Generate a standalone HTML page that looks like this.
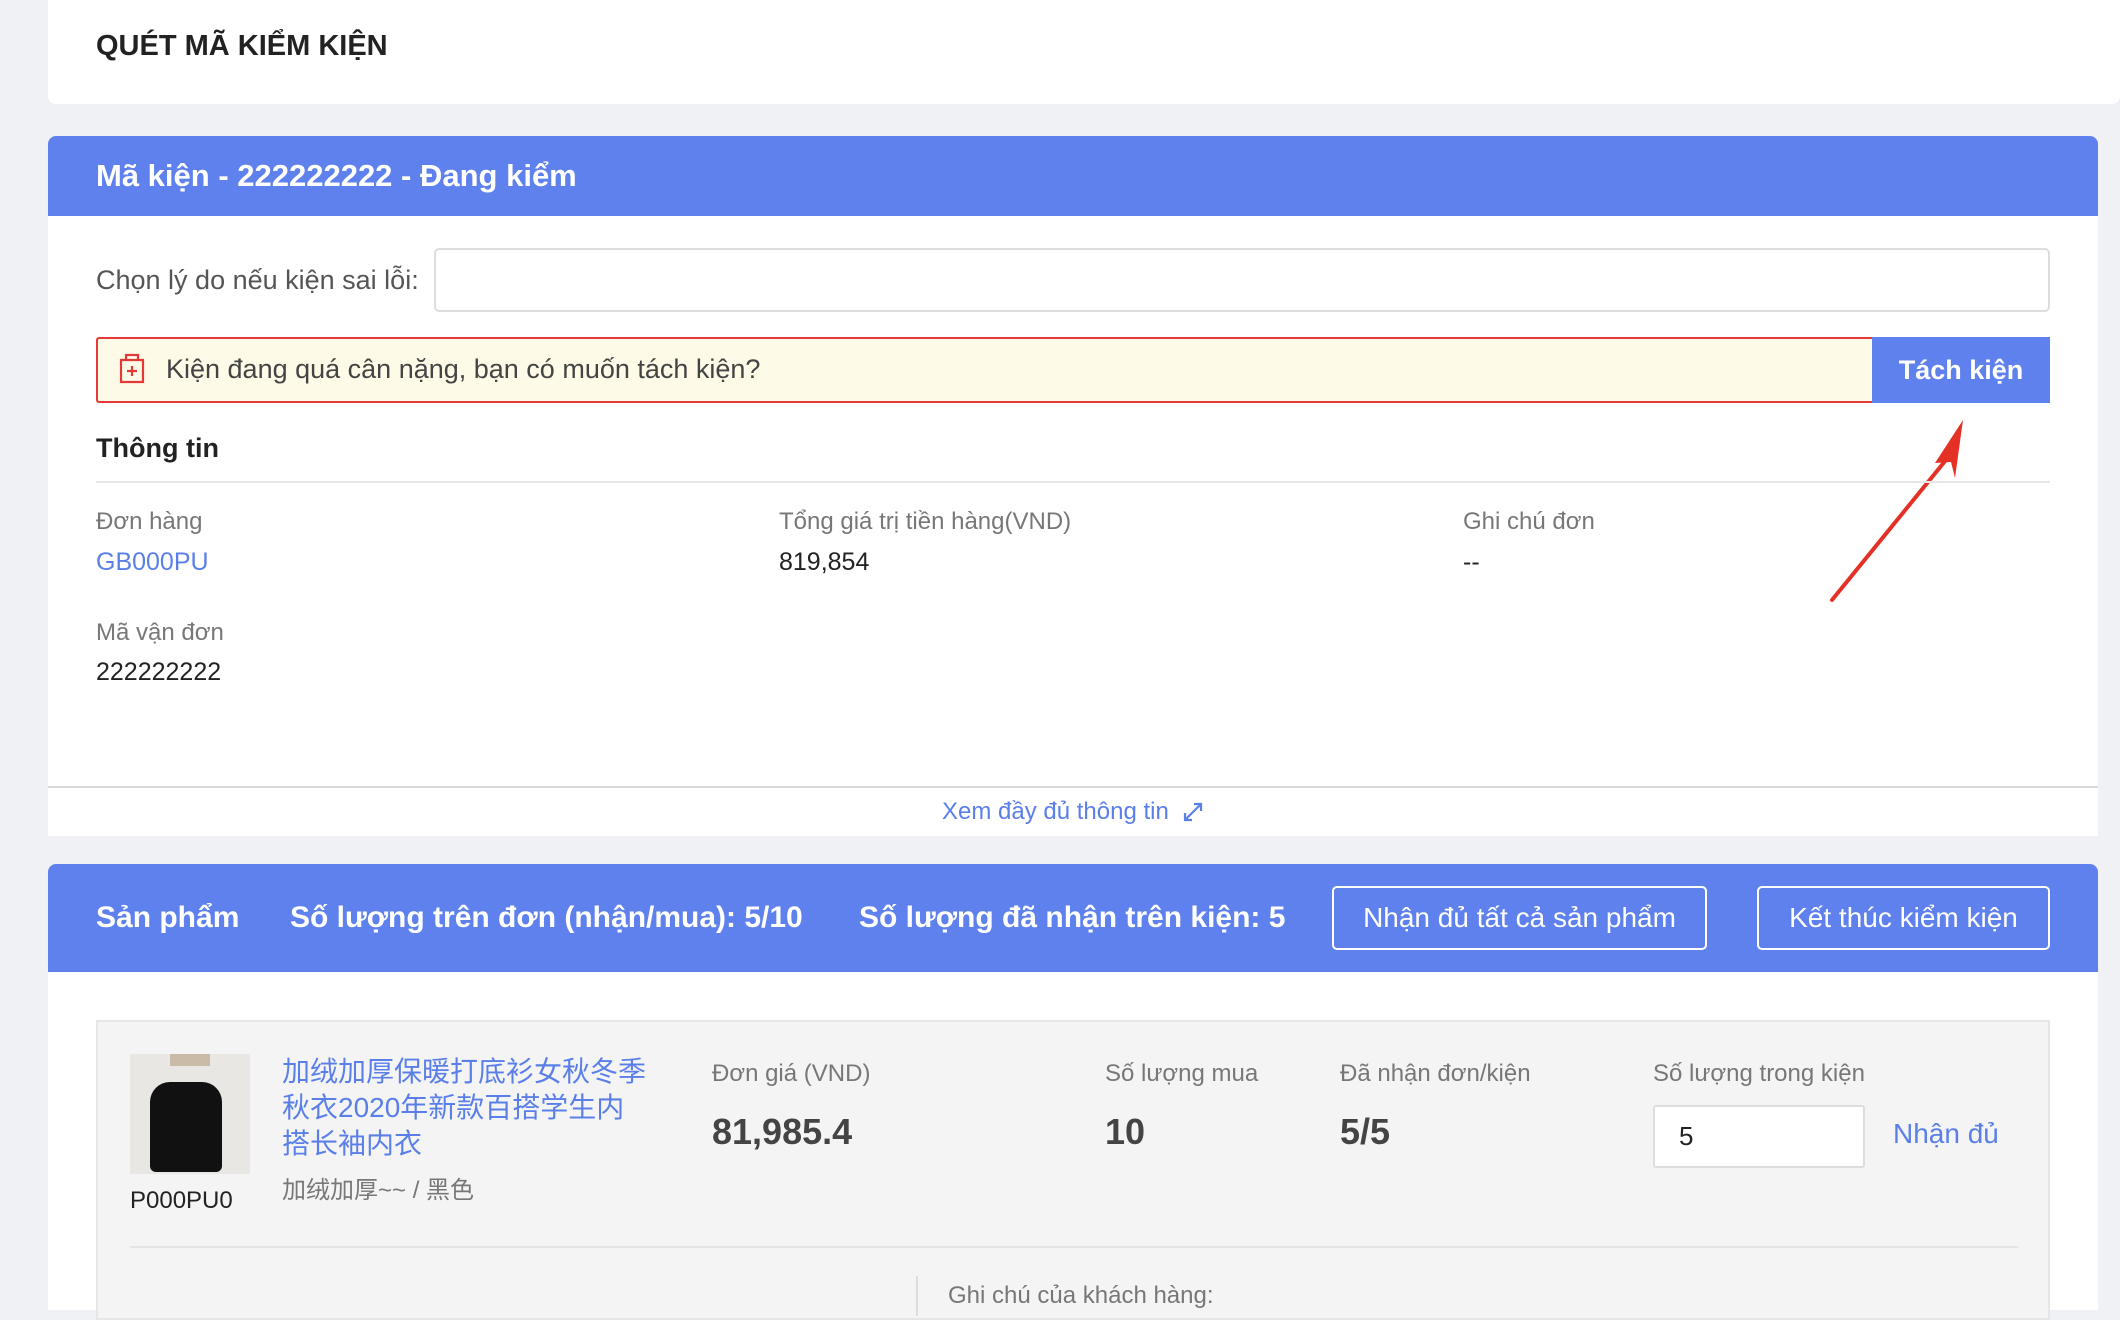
<!DOCTYPE html>
<html><head><meta charset="utf-8"><style>
*{margin:0;padding:0;box-sizing:border-box}
body{width:2120px;height:1310px;background:#f0f1f5;font-family:"Liberation Sans","Noto Sans CJK SC",sans-serif;position:relative;overflow:hidden;color:#333}
.a{position:absolute;white-space:nowrap}
.lbl{font-size:24px;color:#777}
.val{font-size:25px;color:#222}
</style></head><body>
<div class="a" style="left:48px;top:0;width:2072px;height:104px;background:#fff;border-radius:0 0 8px 8px"></div>
<div class="a" style="left:96px;top:30px;font-size:29px;font-weight:bold;color:#222">QUÉT MÃ KIỂM KIỆN</div>

<div class="a" style="left:48px;top:136px;width:2050px;height:700px;background:#fff;border-radius:8px 8px 0 0"></div>
<div class="a" style="left:48px;top:136px;width:2050px;height:80px;background:#5e81ed;border-radius:8px 8px 0 0"></div>
<div class="a" style="left:96px;top:158px;font-size:31px;font-weight:bold;color:#fff">Mã kiện - 222222222 - Đang kiểm</div>

<div class="a lbl" style="left:96px;top:265px;font-size:27px;color:#555">Chọn lý do nếu kiện sai lỗi:</div>
<div class="a" style="left:434px;top:248px;width:1616px;height:64px;border:2px solid #ddd;border-radius:5px;background:#fff"></div>

<div class="a" style="left:96px;top:337px;width:1776px;height:66px;background:#fefae8;border:2px solid #e53935;border-right:none;border-radius:3px 0 0 3px"></div>
<svg class="a" style="left:118px;top:353px" width="28" height="32" viewBox="0 0 28 32"><path d="M8 2h12v5H8z M3 7h22v22H3z" fill="none" stroke="#e53935" stroke-width="2.2"/><path d="M14 13v10M9 18h10" stroke="#e53935" stroke-width="2.2"/></svg>
<div class="a" style="left:166px;top:354px;font-size:27px;color:#444">Kiện đang quá cân nặng, bạn có muốn tách kiện?</div>
<div class="a" style="left:1872px;top:337px;width:178px;height:66px;background:#5e81ed;color:#fff;font-size:27px;font-weight:bold;text-align:center;line-height:66px">Tách kiện</div>

<svg class="a" style="left:0;top:0" width="2120" height="700"><path d="M1832 600 L1950 455" stroke="#e53125" stroke-width="4" stroke-linecap="round"/><path d="M1963 420 L1935 463 L1951 462 L1955 478 Z" fill="#e53125"/></svg>

<div class="a" style="left:96px;top:433px;font-size:27px;font-weight:bold;color:#222">Thông tin</div>
<div class="a" style="left:96px;top:481px;width:1954px;height:2px;background:#e6e6e6"></div>

<div class="a lbl" style="left:96px;top:508px">Đơn hàng</div>
<div class="a val" style="left:96px;top:548px;color:#5b7fe8">GB000PU</div>
<div class="a lbl" style="left:779px;top:508px">Tổng giá trị tiền hàng(VND)</div>
<div class="a val" style="left:779px;top:548px">819,854</div>
<div class="a lbl" style="left:1463px;top:508px">Ghi chú đơn</div>
<div class="a val" style="left:1463px;top:548px">--</div>
<div class="a lbl" style="left:96px;top:619px">Mã vận đơn</div>
<div class="a val" style="left:96px;top:658px">222222222</div>

<div class="a" style="left:48px;top:786px;width:2050px;height:2px;background:#d8d8d8"></div>
<div class="a" style="left:942px;top:798px;font-size:24px;color:#5b7fe8">Xem đầy đủ thông tin</div>
<svg class="a" style="left:1182px;top:801px" width="22" height="22" viewBox="0 0 22 22"><path d="M3 19L19 3M12 3h7v7M3 12v7h7" fill="none" stroke="#5b7fe8" stroke-width="2.2"/></svg>

<div class="a" style="left:48px;top:864px;width:2050px;height:446px;background:#fff;border-radius:8px 8px 0 0"></div>
<div class="a" style="left:48px;top:864px;width:2050px;height:108px;background:#5e81ed;border-radius:8px 8px 0 0"></div>
<div class="a" style="left:96px;top:901px;font-size:30px;font-weight:bold;color:#fff">Sản phẩm</div>
<div class="a" style="left:290px;top:901px;font-size:30px;font-weight:bold;color:#fff">Số lượng trên đơn (nhận/mua): 5/10</div>
<div class="a" style="left:859px;top:901px;font-size:30px;font-weight:bold;color:#fff">Số lượng đã nhận trên kiện: 5</div>
<div class="a" style="left:1332px;top:886px;width:375px;height:64px;border:2px solid #fff;border-radius:5px;color:#fff;font-size:28px;text-align:center;line-height:60px">Nhận đủ tất cả sản phẩm</div>
<div class="a" style="left:1757px;top:886px;width:293px;height:64px;border:2px solid #fff;border-radius:5px;color:#fff;font-size:28px;text-align:center;line-height:60px">Kết thúc kiểm kiện</div>

<div class="a" style="left:96px;top:1020px;width:1954px;height:300px;background:#f4f4f5;border:2px solid #e6e6e6"></div>
<div class="a" style="left:130px;top:1054px;width:120px;height:120px;background:#e9e7e3;overflow:hidden">
<div class="a" style="left:20px;top:28px;width:72px;height:90px;background:#111;border-radius:20px 20px 6px 6px"></div>
<div class="a" style="left:40px;top:0;width:40px;height:12px;background:#c9bba8"></div>
</div>
<div class="a" style="left:130px;top:1187px;font-size:24px;color:#222">P000PU0</div>
<div class="a" style="left:282px;top:1054px;font-size:28px;line-height:36px;color:#5b7fe8;white-space:normal;width:368px">加绒加厚保暖打底衫女秋冬季秋衣2020年新款百搭学生内搭长袖内衣</div>
<div class="a" style="left:282px;top:1170px;font-size:24px;color:#777">加绒加厚~~ / 黑色</div>

<div class="a lbl" style="left:712px;top:1060px">Đơn giá (VND)</div>
<div class="a" style="left:712px;top:1111px;font-size:36px;font-weight:bold;color:#444">81,985.4</div>
<div class="a lbl" style="left:1105px;top:1060px">Số lượng mua</div>
<div class="a" style="left:1105px;top:1111px;font-size:36px;font-weight:bold;color:#444">10</div>
<div class="a lbl" style="left:1340px;top:1060px">Đã nhận đơn/kiện</div>
<div class="a" style="left:1340px;top:1111px;font-size:36px;font-weight:bold;color:#444">5/5</div>
<div class="a lbl" style="left:1653px;top:1060px">Số lượng trong kiện</div>
<div class="a" style="left:1653px;top:1105px;width:212px;height:63px;background:#fff;border:2px solid #ddd;border-radius:3px;font-size:26px;padding-left:24px;line-height:59px;color:#222">5</div>
<div class="a" style="left:1893px;top:1118px;font-size:28px;color:#5b7fe8">Nhận đủ</div>

<div class="a" style="left:130px;top:1246px;width:1888px;height:2px;background:#e4e4e4"></div>
<div class="a" style="left:916px;top:1276px;width:2px;height:40px;background:#ddd"></div>
<div class="a lbl" style="left:948px;top:1282px">Ghi chú của khách hàng:</div>
</body></html>
